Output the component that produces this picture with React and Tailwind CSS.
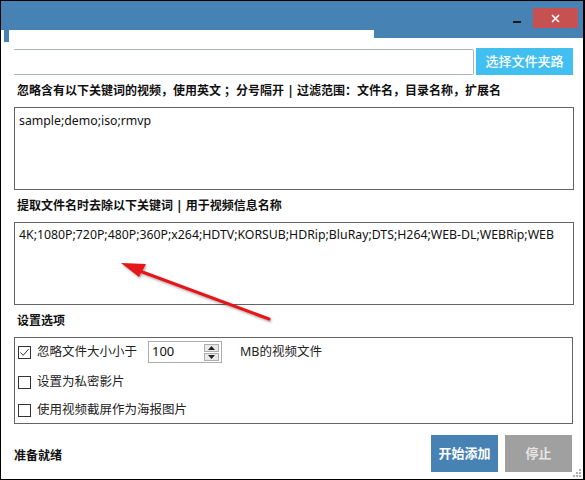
import React from 'react';

const cjk = "font-['Noto_Sans','Noto_Sans_CJK_SC',sans-serif]";

function CheckBox({ checked }) {
  return (
    <span className="w-[13px] h-[13px] border border-[#333] bg-white flex items-center justify-center shrink-0">
      {checked && (
        <svg width="11" height="11" viewBox="0 0 11 11">
          <path d="M1.5 5.5 L4.2 8.3 L9.5 2.2" fill="none" stroke="#333" strokeWidth="1" />
        </svg>
      )}
    </span>
  );
}

function SpinBox({ value }) {
  return (
    <div className="w-[74px] h-[22px] border border-[#abadb3] bg-white flex items-center justify-between pl-[3px] pr-[2px]">
      <span className="text-[13px] text-[#111]">{value}</span>
      <div className="flex flex-col gap-[1px]">
        <span className="w-[15px] h-[8px] border border-[#adadad] bg-[#e9e9e9] flex items-center justify-center">
          <svg width="7" height="4" viewBox="0 0 7 4"><path d="M0 4 L3.5 0 L7 4 Z" fill="#222" /></svg>
        </span>
        <span className="w-[15px] h-[8px] border border-[#adadad] bg-[#e9e9e9] flex items-center justify-center">
          <svg width="7" height="4" viewBox="0 0 7 4"><path d="M0 0 L3.5 4 L7 0 Z" fill="#222" /></svg>
        </span>
      </div>
    </div>
  );
}

export default function App() {
  return (
    <div className={`relative w-[585px] h-[480px] bg-white border-l border-r-[2px] border-b border-black overflow-hidden flex flex-col ${cjk}`}>
      {/* Title bar */}
      <div className="flex items-start shrink-0 border-t border-black">
        <div className="w-[373px] h-[29px] bg-[#4682b4]" />
        <div className="flex-1 h-[37px] bg-[#4682b4] flex items-start justify-end pt-[7px] pr-[5px] gap-[12px]">
          <span className="w-[8px] h-[2px] bg-[#1a1a1a] mt-[13px]" />
          <button className="w-[45px] h-[20px] bg-[#c75050] flex items-center justify-center">
            <svg width="9" height="9" viewBox="0 0 9 9">
              <path d="M1 1 L8 8 M8 1 L1 8" stroke="#fff" strokeWidth="1.6" />
            </svg>
          </button>
        </div>
      </div>

      {/* left tab artifact */}
      <div className="absolute left-[3px] top-[1px] w-[5px] h-[41px] bg-[#4682b4]" />

      <div className="flex-1 flex flex-col pl-[13px] pr-[10px]">
        {/* Folder path row */}
        <div className="flex items-center mt-[10px] h-[27px]">
          <div className="w-[460px] h-[26px] border border-[#abb4bd] border-l-0 rounded-r-[2px] bg-white" />
          <button className="ml-[2px] w-[97px] h-[27px] bg-[#41bff0] text-white text-[13px] font-medium">选择文件夹路</button>
        </div>

        <div className="h-[32px] flex items-center pl-[3px] text-[12px] font-bold text-[#111]">
          忽略含有以下关键词的视频，使用英文 ；分号隔开 | 过滤范围：文件名，目录名称，扩展名
        </div>
        <div className="w-[560px] h-[83px] border border-[#646464] px-[4px] pt-[4px] text-[12.3px] text-[#111]">
          sample;demo;iso;rmvp
        </div>

        <div className="h-[32px] flex items-center pl-[3px] text-[12px] font-bold text-[#111]">
          提取文件名时去除以下关键词 | 用于视频信息名称
        </div>
        <div className="w-[560px] h-[83px] border border-[#646464] px-[4px] pt-[3px] text-[12.3px] text-[#111] whitespace-nowrap">
          4K;1080P;720P;480P;360P;x264;HDTV;KORSUB;HDRip;BluRay;DTS;H264;WEB-DL;WEBRip;WEB
        </div>

        <div className="h-[32px] flex items-center pl-[3px] text-[12px] font-bold text-[#111]">
          设置选项
        </div>
        <div className="w-[559px] h-[87px] border border-[#646464] flex flex-col pl-[3px] pt-[3px] text-[12.5px] text-[#222]">
          <div className="flex items-center h-[22px]">
            <CheckBox checked />
            <span className="ml-[6px] w-[111px]">忽略文件大小小于</span>
            <SpinBox value="100" />
            <span className="ml-[18px]">MB的视频文件</span>
          </div>
          <div className="flex items-center h-[22px] mt-[8px]">
            <CheckBox />
            <span className="ml-[6px]">设置为私密影片</span>
          </div>
          <div className="flex items-center h-[22px] mt-[6px]">
            <CheckBox />
            <span className="ml-[6px]">使用视频截屏作为海报图片</span>
          </div>
        </div>

        {/* Footer */}
        <div className="flex items-center justify-between mt-[11px]">
          <span className="text-[12px] font-bold text-[#111] mt-[4px]">准备就绪</span>
          <div className="flex gap-[7px] mr-[1px]">
            <button className="w-[67px] h-[37px] bg-[#4682b4] text-white text-[13px] font-bold">开始添加</button>
            <button className="w-[67px] h-[37px] bg-[#a0a0a0] text-[#e6e6e6] text-[13px] font-bold">停止</button>
          </div>
        </div>
      </div>

      {/* resize grip */}
      <svg className="absolute right-[1px] bottom-[1px]" width="10" height="10" viewBox="0 0 10 10">
        <g fill="#b0b0b0">
          <rect x="7" y="1" width="2" height="2" />
          <rect x="4" y="4" width="2" height="2" />
          <rect x="7" y="4" width="2" height="2" />
          <rect x="1" y="7" width="2" height="2" />
          <rect x="4" y="7" width="2" height="2" />
          <rect x="7" y="7" width="2" height="2" />
        </g>
      </svg>

      {/* red annotation arrow */}
      <svg className="absolute left-0 top-0 pointer-events-none" width="585" height="480" viewBox="0 0 585 480">
        <defs>
          <filter id="sh" x="-20%" y="-20%" width="140%" height="140%">
            <feDropShadow dx="1" dy="1.5" stdDeviation="1.2" floodColor="#000" floodOpacity="0.35" />
          </filter>
        </defs>
        <g filter="url(#sh)">
          <path d="M268 319 L136 270" stroke="#e3171c" strokeWidth="3.2" strokeLinecap="round" />
          <path d="M120 263 L145 264 L138 277 Z" fill="#e3171c" />
        </g>
      </svg>
    </div>
  );
}
